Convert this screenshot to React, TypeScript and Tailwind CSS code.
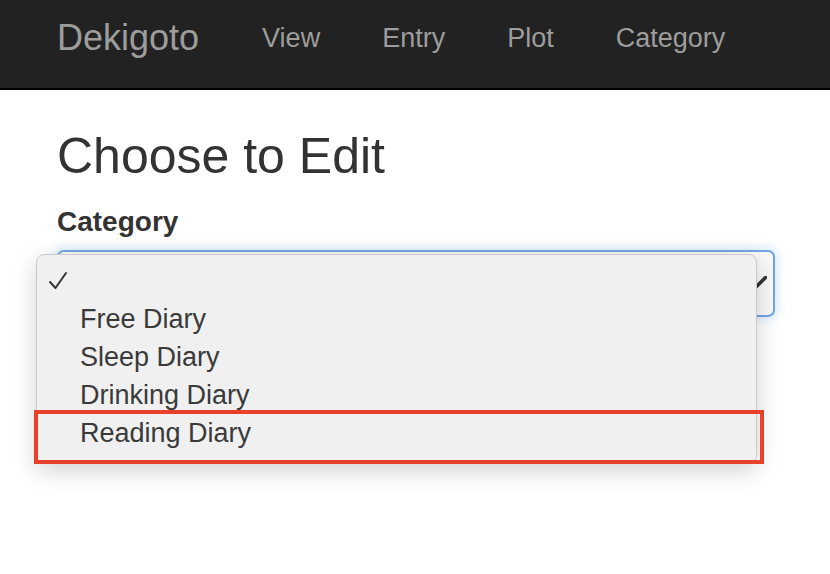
import { useState } from 'react';

const NAV_LINKS = ['View', 'Entry', 'Plot', 'Category'];
const OPTIONS = ['', 'Free Diary', 'Sleep Diary', 'Drinking Diary', 'Reading Diary'];

function CheckMark({ className }: { className?: string }) {
  return (
    <svg viewBox="0 0 20 20" className={className} fill="none" stroke="currentColor">
      <path d="M2 11 L7.5 17 L18 2" strokeWidth="2" strokeLinecap="round" strokeLinejoin="round" />
    </svg>
  );
}

function Navbar() {
  return (
    <nav className="h-[90px] bg-[#222222] border-b-2 border-black flex items-center px-[57px] pb-[12px]">
      <span className="text-[36px] text-[#9d9d9d] leading-none">Dekigoto</span>
      <ul className="flex ml-[32px]">
        {NAV_LINKS.map((link) => (
          <li key={link} className="px-[31px] text-[27px] text-[#9d9d9d] leading-none">
            {link}
          </li>
        ))}
      </ul>
    </nav>
  );
}

function CategorySelect() {
  const [selected] = useState('Reading Diary');
  return (
    <div className="relative h-[67px] w-[718px]">
      <div className="h-full rounded-[7px] border-2 border-[#6fa6e2] bg-[#f8f8f8] shadow-[0_0_10px_3px_rgba(102,175,233,0.25)] flex items-center justify-end pr-[6px]">
        <svg viewBox="0 0 18 14" className="w-[18px] h-[14px] text-[#333] mt-[-2px]">
          <path d="M2 8 L6 12 L16.5 1.5" stroke="currentColor" strokeWidth="3.5" strokeLinecap="round" fill="none" />
        </svg>
      </div>
      <div className="absolute left-[-21px] top-[4px] w-[721px] rounded-[8px] border border-[#c9c9c9] bg-[#f0f0f0] shadow-[0_8px_24px_rgba(0,0,0,0.18)] pt-[7px] pb-[10px]">
        {OPTIONS.map((option, i) => (
          <div key={i} className="relative h-[38px] flex items-center">
            {i === 0 ? (
              <CheckMark className="ml-[11px] w-[20px] h-[20px] text-[#333]" />
            ) : (
              <span className="pl-[43px] text-[27px] text-[#3a3a3a] leading-none">{option}</span>
            )}
            {option === selected && (
              <div className="absolute left-[-3px] top-[-4px] w-[730px] h-[54px] border-[4px] border-[#e8412b]" />
            )}
          </div>
        ))}
      </div>
    </div>
  );
}

export default function App() {
  return (
    <div className="w-[830px] h-[574px] bg-white overflow-hidden font-['Liberation_Sans',Arial,sans-serif]">
      <Navbar />
      <main className="px-[57px]">
        <h1 className="mt-[41px] text-[50px] font-medium text-[#333333] leading-none">Choose to Edit</h1>
        <label className="block mt-[27px] text-[28px] font-bold text-[#333333] leading-none">Category</label>
        <div className="mt-[14px]">
          <CategorySelect />
        </div>
      </main>
    </div>
  );
}
